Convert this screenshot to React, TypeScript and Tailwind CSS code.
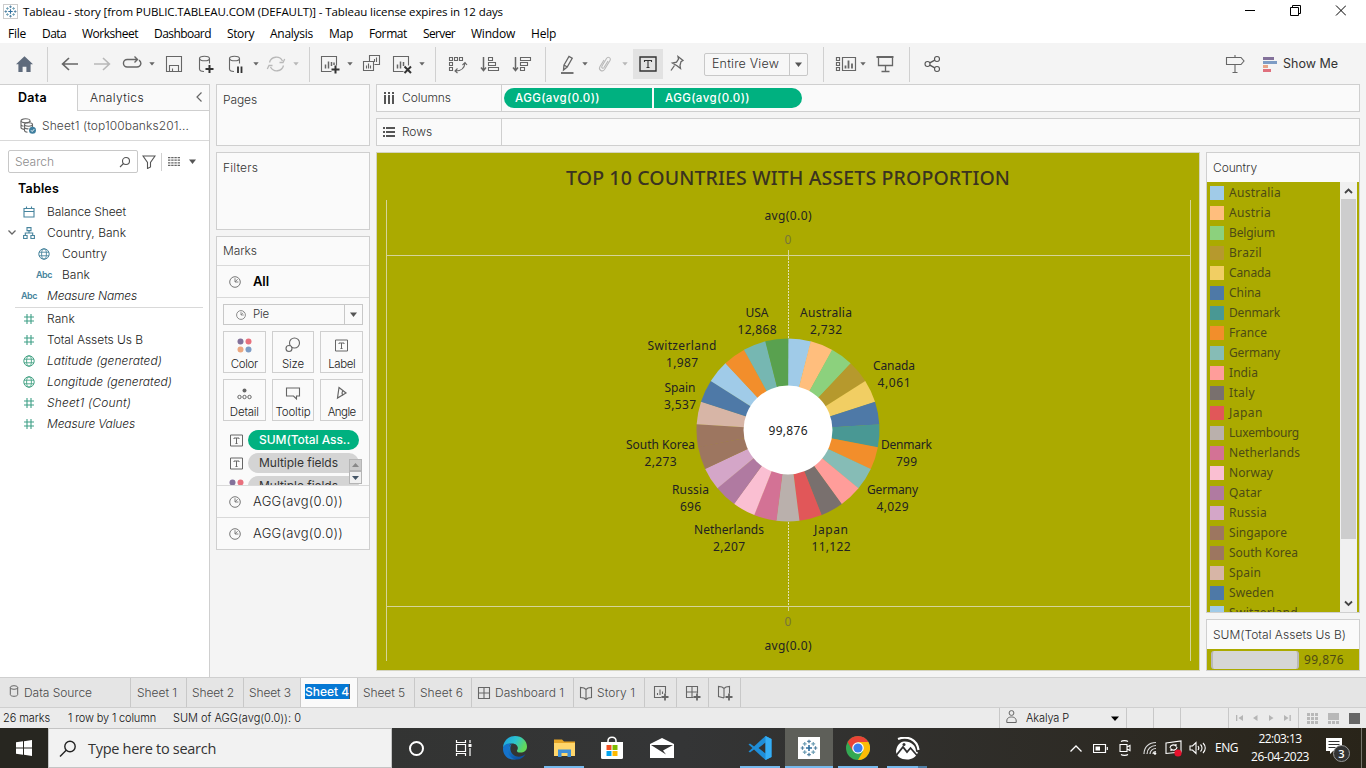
import React, { useLayoutEffect, useRef } from 'react';

const UI = "font-['Inter','Liberation_Sans',sans-serif]";
const SEGOE = "font-['Open_Sans','Noto_Sans',sans-serif]";
const BOOK = "font-['Noto_Sans',sans-serif]";

/** Single-line label whose tracking is adjusted to fill exactly `w` pixels. */
function Fit({ w, c = '', children }: { w: number; c?: string; children: string }) {
  const ref = useRef<HTMLSpanElement>(null);
  useLayoutEffect(() => {
    const el = ref.current;
    if (!el) return;
    el.style.letterSpacing = '0px';
    const natural = el.getBoundingClientRect().width;
    el.style.letterSpacing = `${(w - natural) / children.length}px`;
  }, [w, children]);
  return (
    <span ref={ref} className={`inline-block shrink-0 whitespace-pre ${c}`}>
      {children}
    </span>
  );
}

function Ic({ s = 20, vb, c = 'text-[#666]', children }: { s?: number; vb?: number; c?: string; children: React.ReactNode }) {
  return (
    <svg width={s} height={s} viewBox={`0 0 ${vb ?? s} ${vb ?? s}`} fill="none" stroke="currentColor" strokeWidth="1.1" className={`shrink-0 ${c}`}>
      {children}
    </svg>
  );
}

function Caret({ c = 'text-[#666]' }: { c?: string }) {
  return (
    <svg width="6" height="4" viewBox="0 0 6 4" className={`shrink-0 ${c}`}>
      <path d="M0.3 0.3h5.4L3 3.6z" fill="currentColor" />
    </svg>
  );
}

function Slot({ c, children }: { c: string; children: React.ReactNode }) {
  return <div className={`flex h-10 shrink-0 items-center justify-center ${c}`}>{children}</div>;
}
const Sep = ({ c = '' }: { c?: string }) => <div className={`h-[35px] w-px shrink-0 bg-[#d0d0d0] ${c}`} />;

const TableauMark = ({ s }: { s: number }) => (
  <svg width={s} height={s} viewBox="0 0 16 16" fill="none" stroke="#4f7f9f" strokeWidth="1.1" className="shrink-0">
    <path d="M8 5.3v5.4M5.3 8h5.4" stroke="#2f6f9f" strokeWidth="1.4" />
    <path d="M8 0.6v3.2M6.4 2.2h3.2M8 12.2v3.2M6.4 13.8h3.2M0.6 8h3.2M2.2 6.4v3.2M12.2 8h3.2M13.8 6.4v3.2" />
    <path d="M4.2 2.6v3.4M2.5 4.3h3.4M11.8 2.6v3.4M10.1 4.3h3.4M4.2 10v3.4M2.5 11.7h3.4M11.8 10v3.4M10.1 11.7h3.4" stroke="#6f9fb5" />
  </svg>
);

const menus: [string, number][] = [
  ['File', 18], ['Data', 24], ['Worksheet', 56], ['Dashboard', 57], ['Story', 27], ['Analysis', 43],
  ['Map', 24], ['Format', 38], ['Server', 32], ['Window', 44], ['Help', 25],
];

function TitleBar() {
  return (
    <div className={`h-[43px] shrink-0 bg-white text-black ${SEGOE}`}>
      <div className="flex h-[23px] items-center pl-[3px] pr-[20px]">
        <div className="mt-[-1px] flex h-[15px] w-[15px] items-center justify-center border border-[#ccc]">
          <TableauMark s={13} />
        </div>
        <Fit w={480} c="ml-[5px] text-[11.5px]">Tableau - story [from PUBLIC.TABLEAU.COM (DEFAULT)] - Tableau license expires in 12 days</Fit>
        <svg width="101" height="11" viewBox="0 0 101 11" fill="none" stroke="#000" className="ml-auto mt-[-3px] shrink-0">
          <path d="M0 5.5h10M45.5 2.5h8v8h-8zM47.5 2.5v-2h8v8h-2M91 0.5l10 10M101 0.5l-10 10" />
        </svg>
      </div>
      <div className="flex h-5 items-center gap-4 pl-2 pt-[2px] text-[12px]">
        {menus.map(([m, w]) => <Fit key={m} w={w}>{m}</Fit>)}
      </div>
    </div>
  );
}

function Toolbar() {
  const faint = 'text-[#b8b8b8]';
  return (
    <div className="flex h-[41px] shrink-0 items-center bg-[#f4f4f4] pt-px">
      <Slot c="w-[48px] pr-px">
        <Ic c="text-[#5f6b7c]"><path d="M10.5 2.2l8.5 8h-2.4V18h-4.2v-5.2H8.6V18H4.4v-7.8H2z" fill="currentColor" stroke="none" /></Ic>
      </Slot>
      <Sep c="ml-[-1px]" />
      <Slot c="ml-[6px] w-[32px]"><Ic><path d="M18 10H3M9 4l-6.4 6L9 16" strokeWidth="1.7" /></Ic></Slot>
      <Slot c="w-[32px]"><Ic c={faint}><path d="M2 10h15M11 4l6.4 6L11 16" strokeWidth="1.6" /></Ic></Slot>
      <Slot c="w-[28px]"><Ic><path d="M6.500 13H5.200a3.700 3.700 0 010-7.500H15M12.500 2.500l3 3-3 3M17 6.200c3.200 2.200 2 6.800-2 6.800H6" strokeWidth="1.400" /></Ic></Slot>
      <Slot c="w-[12px]"><Caret /></Slot>
      <Slot c="w-[32px]"><Ic><path d="M2.500 2.500h15v15h-15zM5.500 17.500v-6h9v6M8.500 17v-2.500" /></Ic></Slot>
      <Slot c="w-[32px]"><Ic><ellipse cx="8.500" cy="4.500" rx="5" ry="2.300" /><path d="M3.500 4.500v10.500c0 1.500 2 2.500 4.500 2.500M13.500 4.500v5" /><path d="M13.500 11v8M9.500 15h8" stroke="#333" strokeWidth="2" /></Ic></Slot>
      <Slot c="w-[28px]"><Ic><ellipse cx="8.500" cy="4.500" rx="5" ry="2.300" /><path d="M3.500 4.500v10.500c0 1.500 2 2.500 4.500 2.500M13.500 4.500v5" /><path d="M12 12.500v6.500M15.500 12.500v6.500" stroke="#333" strokeWidth="1.800" /></Ic></Slot>
      <Slot c="w-[12px]"><Caret /></Slot>
      <Slot c="w-[28px]"><Ic c={faint}><path d="M3.500 8.500a7 7 0 0113-1.500M17.500 11.500a7 7 0 01-13 1.500M13.500 8.500h3.500l1.700-3.500M6.500 11.500H3l-1.700 3.500" strokeWidth="1.300" /></Ic></Slot>
      <Slot c="w-[12px]"><Caret c={faint} /></Slot>
      <Sep c="ml-[7px]" />
      <Slot c="ml-[6px] w-[28px]"><Ic><path d="M11.500 17.500h-10v-15h15v9" /><path d="M5.500 14.500v-4M8.500 14.500v-7M11.500 12v-4M14 11V8.500" strokeWidth="1.500" /><path d="M15.500 11.500v8M11.500 15.500h8" stroke="#333" strokeWidth="2" /></Ic></Slot>
      <Slot c="w-[12px]"><Caret /></Slot>
      <Slot c="w-[32px]"><Ic><path d="M7.500 7V1.500h10v9h-5M1.500 7.500h10v9h-10z" /><path d="M4.500 14.500v-3M6.500 14.500v-5M8.500 14.500v-3M12.500 8v-3M14.500 8V3.500" /></Ic></Slot>
      <Slot c="w-[28px]"><Ic><path d="M11.500 17.500h-10v-15h15v9" /><path d="M5.500 14.500v-4M8.500 14.500v-7M11.500 12v-4" strokeWidth="1.500" /><path d="M12.500 12.500l6.500 6.500M19 12.500L12.500 19" stroke="#333" strokeWidth="2" /></Ic></Slot>
      <Slot c="w-[12px]"><Caret /></Slot>
      <Sep c="ml-[7px]" />
      <Slot c="ml-[6px] w-[32px]"><Ic><path d="M1.500 3.500h3v3h-3zM6.500 3.500h3v3h-3zM11.500 3.500h3v3h-3zM1.500 8.500h3v3h-3zM1.500 13.500h3v3h-3zM7.500 17c6 0 9-3 9.500-8M14.500 11l2.500-2.500 2 2.500M9.500 14.500L7 17l2.500 2" /></Ic></Slot>
      <Slot c="w-[32px]"><Ic><path d="M3.500 3v13M1 13.500l2.500 3 2.500-3" strokeWidth="1.500" /><path d="M8.500 3.500h4v3h-4zM8.500 8.500h7v3h-7zM8.500 13.500h10v3h-10z" /></Ic></Slot>
      <Slot c="w-[32px]"><Ic><path d="M3.500 3v13M1 13.500l2.500 3 2.500-3" strokeWidth="1.500" /><path d="M8.500 3.500h10v3h-10zM8.500 8.500h7v3h-7zM8.500 13.500h4v3h-4z" /></Ic></Slot>
      <Sep c="ml-[7px]" />
      <Slot c="ml-[11px] w-[22px]"><Ic><path d="M3 19h12.500" strokeWidth="1.800" /><path d="M6 11l5-8.500 3.200 1.800L9.200 13 5.500 16zM6 11l3.200 2" strokeWidth="1.300" /></Ic></Slot>
      <Slot c="w-[12px]"><Caret /></Slot>
      <Slot c="ml-[2px] w-[24px]"><Ic c={faint}><path d="M13 7l-4 6.500c-1 1.500-3 .5-2-1.500L11.500 4.500c1.500-2.500 5-.5 3.500 2L9.500 15.500c-2 3-6.500.5-4.500-3L9 6" /></Ic></Slot>
      <Slot c="w-[16px]"><Caret c={faint} /></Slot>
      <div className="flex h-[30px] w-[30px] shrink-0 items-center justify-center bg-[#e2e2e2]">
        <Ic s={18} c="text-[#333]"><path d="M1 2h16v14H1z" strokeWidth="1.400" /><path d="M5.500 7V5.500h7V7M9 5.500v7M7.500 12.500h3" /></Ic>
      </div>
      <Slot c="w-[28px]"><Ic><path d="M11 3l5 4-2 1.200-1 3.800.5 3-3.500-2.800L5.500 9.500l4-.8 2-3zM7.500 12L4 17" transform="translate(0 -0.500)" strokeWidth="1.300" /></Ic></Slot>
      <div className="ml-[13px] flex h-[23px] w-[104px] shrink-0 items-center rounded-[2px] border border-[#c8c8c8] bg-[#f7f7f7]">
        <div className="flex h-full w-[85px] items-center border-r border-[#c8c8c8] pl-[7px]"><Fit w={67} c={`text-[12.500px] font-light text-[#333] ${UI}`}>Entire View</Fit></div>
        <div className="flex flex-1 justify-center"><svg width="7" height="5"><path d="M0 0.500h7L3.500 5z" fill="#555" /></svg></div>
      </div>
      <Sep c="ml-[15px]" />
      <Slot c="ml-[10px] w-[24px]"><svg width="22" height="20" fill="none" stroke="#666" strokeWidth="1.200"><path d="M1.500 3.500h3v3h-3zM1.500 8.500h3v3h-3zM1.500 13.500h3v3h-3zM7.500 3.500h13v13h-13z" /><path d="M10.500 14.500v-3M13.500 14.500v-8M17 14.500v-5" strokeWidth="1.800" /></svg></Slot>
      <Slot c="w-[10px]"><Caret /></Slot>
      <Slot c="w-[34px]"><Ic><path d="M1.500 3h17" strokeWidth="2" /><path d="M3.500 4v7.500h14V4M10.500 12v6M6.500 17.500h8" strokeWidth="1.300" /></Ic></Slot>
      <Sep c="ml-[7px]" />
      <Slot c="ml-[7px] w-[30px]"><Ic c="text-[#555]"><circle cx="5.500" cy="10" r="2.500" /><circle cx="15" cy="5" r="2.500" /><circle cx="15" cy="15" r="2.500" /><path d="M7.800 8.800l5-2.600M7.800 11.200l5 2.600" strokeWidth="1.400" /></Ic></Slot>
      <Slot c="ml-[273px] w-[30px]"><Ic><path d="M1.500 3.500h14.500l3 3.500-3 3.500H1.500zM10 1v2M10 11v7M7.500 18.500h5" /></Ic></Slot>
      <svg width="14" height="15" className="ml-[13px] shrink-0">
        <path d="M0 0h11v3H0z" fill="#83719a" /><path d="M0 4h14v3H0z" fill="#7d9cc5" /><path d="M0 8h5v3H0z" fill="#e8a487" /><path d="M0 12h8v3H0z" fill="#e0707d" />
      </svg>
      <Fit w={55} c={`ml-[6px] text-[12.5px] text-[#333] ${UI}`}>Show Me</Fit>
    </div>
  );
}

const Globe = ({ c }: { c: string }) => (
  <Ic s={12} c={c}><circle cx="6" cy="6" r="5.200" strokeWidth="1" /><ellipse cx="6" cy="6" rx="2.400" ry="5.200" strokeWidth="0.900" /><path d="M1 4.200h10M1 7.800h10" strokeWidth="0.900" /></Ic>
);
const Hash = () => <Ic s={12} c="text-[#3f9f86]"><path d="M4 1v10M8 1v10M1 4h10M1 8h10" strokeWidth="1.100" /></Ic>;
const Abc = () => <Fit w={16} c="text-[9px] font-semibold text-[#47849d]">Abc</Fit>;
const Cal = () => <Ic s={12} c="text-[#47849d]"><path d="M1 2.500h10v8.500H1zM1 5.500h10M3.500 0.500v2M8.500 0.500v2" /></Ic>;
const Tree = () => <Ic s={12} c="text-[#47849d]"><path d="M4 0.600h4v3H4zM0.600 8.500h3.500v3H0.600zM7.900 8.500h3.500v3H7.900zM6 3.500v2.500M2.300 8.500V6h7.400v2.500" /></Ic>;

function Field({ icon, name, w, italic, indent, open }: { icon: React.ReactNode; name: string; w: number; italic?: boolean; indent?: boolean; open?: boolean }) {
  return (
    <div className={`flex h-[21px] items-center ${indent ? 'pl-[15px]' : ''}`}>
      <div className="flex w-5 items-center justify-center">{open && <svg width="8" height="5" fill="none" stroke="#666" strokeWidth="1.300" className="ml-[3px]"><path d="M0.500 0.500L4 4l3.500-3.500" /></svg>}</div>
      <div className="flex w-[18px] shrink-0 items-center justify-center">{icon}</div>
      <Fit w={w} c={`ml-[9px] text-[12px] font-light text-[#1c1c1c] ${italic ? 'italic' : ''}`}>{name}</Fit>
    </div>
  );
}

function DataPane() {
  const teal = 'text-[#47849d]';
  const green = 'text-[#45a385]';
  return (
    <div className={`flex w-[210px] shrink-0 flex-col border-r border-t border-[#cfcfcf] bg-white ${UI}`}>
      <div className="flex h-[26px] shrink-0">
        <div className="flex w-[77px] items-center pl-[18px]"><Fit w={29} c="text-[12.5px] font-semibold text-black">Data</Fit></div>
        <div className="flex flex-1 items-center justify-between border-b border-l border-[#cfcfcf] bg-[#fafafa] pl-[12px] pr-[7px]">
          <Fit w={54} c="text-[12px] font-light text-[#222]">Analytics</Fit>
          <svg width="6" height="10" fill="none" stroke="#666" strokeWidth="1.200" className="mt-[-2px]"><path d="M5.500 0.500L1 5l4.500 4.500" /></svg>
        </div>
      </div>
      <div className="flex h-[30px] shrink-0 items-center border-b border-[#d9d9d9] pl-[20px]">
        <Ic s={16} c="text-[#666]">
          <ellipse cx="5.500" cy="2.800" rx="4.500" ry="2" /><path d="M1 3v6.500c0 1 1.500 1.700 3 1.900M10 3v1M1 6.500c0 1 1.200 1.500 2.500 1.800" />
          <ellipse cx="8.500" cy="6.500" rx="4" ry="1.700" /><path d="M4.500 6.500v6c0 1 1.500 1.600 3 1.800M12.500 6.500V9M4.500 9.500c.5 1 2 1.500 4 1.300" />
          <circle cx="12.500" cy="12.300" r="3.500" fill="#3f7f9f" stroke="none" /><path d="M11 12.300l1.200 1.200 2-2.300" stroke="#fff" strokeWidth="1" />
        </Ic>
        <Fit w={147} c="ml-[6px] text-[12px] font-light text-[#444]">Sheet1 (top100banks201...</Fit>
      </div>
      <div className="mt-[9px] flex h-[23px] shrink-0 items-center pl-2">
        <div className="flex h-[23px] w-[130px] items-center justify-between rounded-[2px] border border-[#c8c8c8] pl-[6px] pr-[6px]">
          <Fit w={39} c="text-[12px] font-light text-[#8c8c8c]">Search</Fit>
          <Ic s={12} c="text-[#555]"><circle cx="7" cy="5" r="3.500" /><path d="M4.500 7.500L1 11" /></Ic>
        </div>
        <Ic s={14} c="ml-[4px] text-[#555]"><path d="M1 1h12L8.500 7.500V12l-3 1.500v-6z" /></Ic>
        <div className="ml-[5px] h-[18px] w-px bg-[#d0d0d0]" />
        <svg width="12" height="9" className="ml-[6px]" stroke="#666" strokeWidth="1.300" strokeDasharray="2.400 0.800"><path d="M0 0.500h12M0 3.200h12M0 5.800h12M0 8.500h12" /></svg>
        <svg width="7" height="5" className="ml-[9px]"><path d="M0 0.500h7L3.500 5z" fill="#555" /></svg>
      </div>
      <div className="mt-[6px] flex h-[20px] shrink-0 items-center pl-[18px]"><Fit w={41} c="text-[12.5px] font-semibold text-black">Tables</Fit></div>
      <div className="mt-[2px]">
        <Field icon={<Cal />} name="Balance Sheet" w={79} />
        <Field icon={<Tree />} name="Country, Bank" w={79} open />
        <Field icon={<Globe c={teal} />} name="Country" w={45} indent />
        <Field icon={<Abc />} name="Bank" w={28} indent />
        <Field icon={<Abc />} name="Measure Names" w={90} italic />
      </div>
      <div className="mx-[15px] mb-px h-px w-[188px] translate-y-px bg-[#d9d9d9]" />
      <div>
        <Field icon={<Hash />} name="Rank" w={28} />
        <Field icon={<Hash />} name="Total Assets Us B" w={96} />
        <Field icon={<Globe c={green} />} name="Latitude (generated)" w={115} italic />
        <Field icon={<Globe c={green} />} name="Longitude (generated)" w={125} italic />
        <Field icon={<Hash />} name="Sheet1 (Count)" w={84} italic />
        <Field icon={<Hash />} name="Measure Values" w={88} italic />
      </div>
    </div>
  );
}

const PieIcon = ({ s = 12 }: { s?: number }) => (
  <Ic s={s} vb={12} c="text-[#777]"><circle cx="6" cy="6" r="5.300" strokeWidth="1" /><path d="M6 6V2.200M6 6h3.400M6 6l2.600-2.800" strokeWidth="0.900" /></Ic>
);
const TextIcon = ({ c = '' }: { c?: string }) => (
  <svg width="13" height="13" viewBox="0 0 13 13" fill="none" stroke="#666" className={`shrink-0 ${c}`}><path d="M0.500 1h12v11h-12z" /><path d="M4 5V4h5v1M6.500 4v5M5.500 9.500h2" /></svg>
);
const Dots = () => (
  <svg width="15" height="15" className="shrink-0"><circle cx="3.500" cy="3.500" r="3" fill="#83719a" /><circle cx="11.500" cy="3.500" r="3" fill="#e8707d" /><circle cx="3.500" cy="11.500" r="3" fill="#eba780" /><circle cx="11.500" cy="11.500" r="3" fill="#7d9cc5" /></svg>
);

function MarkButton({ label, w, children }: { label: string; w: number; children: React.ReactNode }) {
  return (
    <div className="flex h-[42px] flex-col items-center border border-[#cfcfcf] bg-[#fafafa]">
      <div className="flex h-[26px] items-center justify-center">{children}</div>
      <Fit w={w} c="text-[11.500px] font-light leading-[12px] text-[#1c1c1c]">{label}</Fit>
    </div>
  );
}

function Cards() {
  const card = 'border border-[#cfcfcf] bg-[#fafafa]';
  return (
    <div className={`ml-[6px] flex w-[154px] shrink-0 flex-col gap-[6px] text-[12px] font-light text-[#333] ${UI}`}>
      <div className={`h-[62px] pl-[6px] pt-[6px] leading-[18px] ${card}`}><Fit w={34}>Pages</Fit></div>
      <div className={`h-[78px] pl-[6px] pt-[6px] leading-[18px] ${card}`}><Fit w={35}>Filters</Fit></div>
      <div className={`flex h-[314px] flex-col ${card}`}>
        <div className="flex h-[29px] shrink-0 items-center border-b border-[#d9d9d9] pl-[6px]"><Fit w={34}>Marks</Fit></div>
        <div className="flex h-[32px] shrink-0 items-center border-b border-[#d9d9d9] pl-[12px]"><PieIcon /><Fit w={16} c="ml-[12px] text-[13px] font-semibold text-black">All</Fit></div>
        <div className="mx-[6px] mt-[6px] flex h-[21px] shrink-0 items-center border border-[#c8c8c8]">
          <div className="flex h-full flex-1 items-center border-r border-[#c8c8c8] pl-[12px]"><PieIcon s={10} /><Fit w={16} c="ml-[7px] text-[11.500px]">Pie</Fit></div>
          <div className="flex w-[17px] justify-center"><svg width="7" height="5"><path d="M0 0.500h7L3.500 5z" fill="#555" /></svg></div>
        </div>
        <div className="mx-[6px] mt-[6px] grid shrink-0 grid-cols-3 gap-[6px]">
          <MarkButton label="Color" w={27}><Dots /></MarkButton>
          <MarkButton label="Size" w={22}><Ic s={16}><circle cx="9.500" cy="6" r="5" /><circle cx="4" cy="11.500" r="3" fill="#fafafa" /></Ic></MarkButton>
          <MarkButton label="Label" w={27}><TextIcon /></MarkButton>
          <MarkButton label="Detail" w={29}><svg width="15" height="12" fill="none" stroke="#666" className="mt-[1px]"><circle cx="7.500" cy="2.500" r="2" fill="#666" stroke="none" /><circle cx="2.500" cy="9" r="1.700" /><circle cx="7.500" cy="9" r="1.700" /><circle cx="12.500" cy="9" r="1.700" /></svg></MarkButton>
          <MarkButton label="Tooltip" w={35}><Ic s={16}><path d="M1.500 3h13v8H11.500v3L8.500 11h-7z" /></Ic></MarkButton>
          <MarkButton label="Angle" w={28}><Ic s={14}><path d="M4 1.500l7 5.500-8.500 5z" strokeWidth="1.200" /><path d="M7.800 4.700c-1 1.500-.9 3.400.2 4.700" /></Ic></MarkButton>
        </div>
        <div className="relative mt-[9px] h-[56px] shrink-0 overflow-hidden border-b border-[#d9d9d9] text-[12px] font-normal">
          <div className="flex flex-col gap-[3px]">
            <div className="flex items-center pl-[13px]"><TextIcon /><div className="ml-[5px] flex h-5 w-[111px] items-center rounded-full bg-[#00b180] pl-[11px] text-white"><Fit w={91} c="font-medium">SUM(Total Ass..</Fit></div></div>
            <div className="flex items-center pl-[13px]"><TextIcon /><div className="ml-[5px] flex h-5 w-[111px] items-center rounded-full bg-[#d4d4d4] pl-[11px] text-[#333]"><Fit w={79}>Multiple fields</Fit></div></div>
            <div className="flex items-center pl-[12px]"><Dots /><div className="ml-[4px] flex h-5 w-[111px] items-center rounded-full bg-[#d4d4d4] pl-[11px] text-[#333]"><Fit w={79}>Multiple fields</Fit></div></div>
          </div>
          <div className="absolute right-[7px] top-[29px] flex w-[13px] flex-col">
            <div className="flex h-[12px] items-center justify-center border border-[#b5b5b5] bg-[#cacaca]"><svg width="7" height="4"><path d="M0 4h7L3.500 0z" fill="#888" /></svg></div>
            <div className="flex h-[13px] items-center justify-center border border-[#b5b5b5] bg-[#f0f0f0]"><svg width="7" height="4"><path d="M0 0h7L3.500 4z" fill="#445566" /></svg></div>
          </div>
        </div>
        <div className="flex h-[32px] shrink-0 items-center border-b border-[#d9d9d9] pl-[12px]"><PieIcon /><Fit w={90} c="ml-[12px] text-[13px] text-[#1c1c1c]">AGG(avg(0.0))</Fit></div>
        <div className="flex h-[31px] shrink-0 items-center pl-[12px]"><PieIcon /><Fit w={90} c="ml-[12px] text-[13px] text-[#1c1c1c]">AGG(avg(0.0))</Fit></div>
      </div>
    </div>
  );
}

const slices = [
  '#a0cbe8', '#ffbe7d', '#8cd17d', '#b6992d', '#f1ce63', '#4e79a7', '#499894', '#f28e2b', '#86bcb6', '#ff9d9a', '#79706e', '#e15759', '#bab0ac',
  '#d37295', '#fabfd2', '#b07aa1', '#d4a6c8', '#9d7660', '#9d7660', '#d7b5a6', '#4e79a7', '#a0cbe8', '#f28e2b', '#76b7b2', '#59a14f',
];
const countries = ['Australia', 'Austria', 'Belgium', 'Brazil', 'Canada', 'China', 'Denmark', 'France', 'Germany', 'India', 'Italy', 'Japan', 'Luxembourg', 'Netherlands', 'Norway', 'Qatar', 'Russia', 'Singapore', 'South Korea', 'Spain', 'Sweden', 'Switzerland'];
const countryWidths = [52, 42, 46, 33, 42, 32, 51, 38, 51, 29, 26, 34, 70, 71, 44, 33, 38, 58, 69, 32, 45, 69];

/* name, value, centre x, first baseline, name width, value width */
const labels: [string, string, number, number, number, number][] = [
  ['USA', '12,868', 380, 165, 23, 39], ['Australia', '2,732', 449, 165, 52, 32],
  ['Canada', '4,061', 517, 218, 42, 33], ['Denmark', '799', 529.5, 297, 51, 21],
  ['Germany', '4,029', 515.5, 342, 51, 32], ['Japan', '11,122', 454, 382, 34, 39],
  ['Netherlands', '2,207', 352, 382, 70, 32], ['Russia', '696', 313.500, 342, 37, 21],
  ['South Korea', '2,273', 283.500, 297, 69, 32], ['Spain', '3,537', 303, 240, 31, 32],
  ['Switzerland', '1,987', 305, 198, 69, 32],
];

function slicePath(i: number) {
  const cx = 411, cy = 278, R = 91.500, step = (Math.PI * 2) / slices.length;
  const a = i * step, b = a + step + 0.004;
  return `M${cx} ${cy}L${cx + R * Math.sin(a)} ${cy - R * Math.cos(a)}A${R} ${R} 0 0 1 ${cx + R * Math.sin(b)} ${cy - R * Math.cos(b)}Z`;
}

function Sheet() {
  return (
    <div className={`h-[519px] w-[824px] shrink-0 border border-[#d4d4c0] bg-[#abaa00] ${BOOK}`}>
      <svg width="822" height="517" viewBox="0 1 822 517" textAnchor="middle" fontSize="12" fill="#222">
        <text x="411" y="33" fontSize="19.500" fontWeight="500" fill="#3a3320" textLength="444">TOP 10 COUNTRIES WITH ASSETS PROPORTION</text>
        <g stroke="#d5d49a" fill="none" shapeRendering="crispEdges">
          <path d="M9.500 48v461M813.500 48v461M9.500 103.500h804M9.500 454.500h804" />
          <path d="M411.500 98v8M411.500 454v5" />
          <path d="M411.500 106v348" strokeDasharray="2 1" stroke="#e2e1b8" />
        </g>
        <text x="411" y="68" textLength="47">avg(0.0)</text>
        <text x="411" y="92" fill="#77743a">0</text>
        <text x="411" y="474" fill="#77743a">0</text>
        <text x="411" y="498" textLength="47">avg(0.0)</text>
        {slices.map((f, i) => <path key={i} d={slicePath(i)} fill={f} />)}
        <circle cx="411" cy="278" r="44.500" fill="#fff" />
        <text x="411" y="283" textLength="39">99,876</text>
        {labels.map(([n, v, x, y, nw, vw]) => (
          <g key={n}>
            <text x={x} y={y} textLength={nw}>{n}</text>
            <text x={x} y={y + 17} textLength={vw}>{v}</text>
          </g>
        ))}
      </svg>
    </div>
  );
}

function Legends() {
  return (
    <div className="ml-[6px] flex w-[154px] shrink-0 flex-col gap-[6px]">
      <div className="flex h-[461px] flex-col border border-[#cfcfcf] bg-[#fafafa]">
        <div className={`flex h-[29px] shrink-0 items-center pl-[6px] ${UI}`}><Fit w={44} c="text-[12px] font-light text-[#333]">Country</Fit></div>
        <div className="flex flex-1 overflow-hidden bg-[#abaa00] pr-[2px]">
          <div className={`h-[430px] flex-1 overflow-hidden pt-px ${BOOK}`}>
            {countries.map((n, i) => (
              <div key={n} className="flex h-5 items-center pl-[3px]">
                <svg width="14" height="14" className="shrink-0"><rect width="14" height="14" fill={slices[i]} /></svg>
                <Fit w={countryWidths[i]} c="ml-[5px] text-[12px] leading-5 text-[#4d4a14]">{n}</Fit>
              </div>
            ))}
          </div>
          <div className="flex h-[430px] w-[17px] flex-col items-center bg-[#f0f0f0]">
            <svg width="15" height="17" className="shrink-0" fill="none" stroke="#444" strokeWidth="1.800"><path d="M4 11l3.500-3.500L11 11" /></svg>
            <div className="h-[340px] w-[15px] bg-[#cdcdcd]" />
            <svg width="15" height="17" className="mt-auto shrink-0" fill="none" stroke="#444" strokeWidth="1.800"><path d="M4 6.500l3.500 3.500L11 6.500" /></svg>
          </div>
        </div>
      </div>
      <div className="flex h-[52px] flex-col border border-[#cfcfcf] bg-[#fafafa]">
        <div className={`flex h-[29px] shrink-0 items-center pl-[6px] ${UI}`}><Fit w={133} c="text-[12px] font-light text-[#333]">SUM(Total Assets Us B)</Fit></div>
        <div className={`flex flex-1 items-center bg-[#abaa00] pl-[4px] ${BOOK}`}>
          <div className="h-[18px] w-[88px] rounded-[3px] border-x-2 border-[#b9b9b9] bg-[#d6d6d6]" />
          <Fit w={40} c="ml-[5px] text-[12px] text-[#4d4a14]">99,876</Fit>
        </div>
      </div>
    </div>
  );
}

function Shelf({ label, w, rows, children }: { label: string; w: number; rows?: boolean; children?: React.ReactNode }) {
  return (
    <div className="flex h-[28px] shrink-0 border border-[#cfcfcf] bg-[#fafafa]">
      <div className="flex w-[125px] items-center border-r border-[#cfcfcf] pl-[6px]">
        <svg width="13" height="12" stroke="#555" strokeWidth="2" fill="none">
          {rows ? <path d="M0 2h2M3 2h9M0 6h2M3 6h9M0 10h2M3 10h9" /> : <path d="M2 0v2M2 3v9M6 0v2M6 3v9M10 0v2M10 3v9" />}
        </svg>
        <Fit w={w} c="ml-[6px] text-[12px] font-light text-[#333]">{label}</Fit>
      </div>
      <div className="flex items-center gap-[2px] pl-[2px]">{children}</div>
    </div>
  );
}

function Workspace() {
  return (
    <div className={`ml-[6px] flex w-[984px] shrink-0 flex-col gap-[6px] ${UI}`}>
      <Shelf label="Columns" w={49}>
        <div className="flex h-5 w-[148px] items-center rounded-l-full bg-[#00b180] pl-[11px] pt-px"><Fit w={85} c="text-[11.500px] font-medium text-white">AGG(avg(0.0))</Fit></div>
        <div className="flex h-5 w-[148px] items-center rounded-r-full bg-[#00b180] pl-[11px] pt-px"><Fit w={85} c="text-[11.500px] font-medium text-white">AGG(avg(0.0))</Fit></div>
      </Shelf>
      <Shelf label="Rows" w={30} rows />
      <div className="flex"><Sheet /><Legends /></div>
    </div>
  );
}

const DashIcon = ({ plus }: { plus?: boolean }) => <Ic s={16}><path d={plus ? 'M8.500 12.500h-7v-11h11v7M7 1.500v11M1.500 7h11' : 'M2.500 2.500h11v11h-11zM8 2.500v11M2.500 8h11'} />{plus && <path d="M12 8.500v7M8.500 12h7" strokeWidth="1.800" />}</Ic>;
const BookIcon = ({ plus }: { plus?: boolean }) => <Ic s={16}><path d={plus ? 'M7 13L1.500 11.500v-10L5 2l2 1.500L9 2l3.500-.5v7M7 3.500V13' : 'M8 14.500l-2-1.500-3.500-.5v-10L6 3l2 1.500L10 3l3.500-.5v10l-3.500.5zM8 4.500v10'} />{plus && <path d="M12 8.500v7M8.500 12h7" strokeWidth="1.800" />}</Ic>;
const SheetPlus = () => <Ic s={16}><path d="M8.500 12.500h-7v-11h11v7M4.500 10V8M7 10V4.500M9.500 9V6.500" /><path d="M12 8.500v7M8.500 12h7" strokeWidth="1.800" /></Ic>;

function Tabs() {
  const tab = 'flex shrink-0 items-center border-r border-[#c8c8c8]';
  return (
    <div className={`flex h-[31px] shrink-0 border-y border-[#cfcfcf] bg-[#e5e5e5] text-[12px] font-light text-[#4a4a4a] ${UI}`}>
      <div className={`w-[131px] pl-[9px] ${tab}`}>
        <svg width="10" height="12" fill="none" stroke="#666" className="mt-[-3px]"><ellipse cx="5" cy="2.500" rx="3.700" ry="1.800" /><path d="M1.300 2.500v7c0 2.400 7.400 2.400 7.400 0v-7" /></svg>
        <Fit w={68} c="ml-[5px]">Data Source</Fit>
      </div>
      <div className={`w-[56px] pl-[6px] ${tab}`}><Fit w={40}>Sheet 1</Fit></div>
      <div className={`w-[57px] pl-[5px] ${tab}`}><Fit w={42}>Sheet 2</Fit></div>
      <div className={`w-[57px] pl-[5px] ${tab}`}><Fit w={42}>Sheet 3</Fit></div>
      <div className={`w-[57px] bg-[#fafafa] pl-[4px] ${tab}`}><div className="mt-[-2px] flex h-[15px] w-[45px] items-center border-r border-[#555] bg-[#0578d4] text-white"><Fit w={44} c="font-medium">Sheet 4</Fit></div></div>
      <div className={`w-[57px] pl-[5px] ${tab}`}><Fit w={42}>Sheet 5</Fit></div>
      <div className={`w-[57px] pl-[5px] ${tab}`}><Fit w={43}>Sheet 6</Fit></div>
      <div className={`w-[102px] pl-[4px] ${tab}`}><DashIcon /><Fit w={69} c="ml-[3px]">Dashboard 1</Fit></div>
      <div className={`w-[71px] pl-[4px] ${tab}`}><BookIcon /><Fit w={38} c="ml-[3px]">Story 1</Fit></div>
      <div className={`w-[32px] justify-center ${tab}`}><SheetPlus /></div>
      <div className={`w-[32px] justify-center ${tab}`}><DashIcon plus /></div>
      <div className={`w-[32px] justify-center ${tab}`}><BookIcon plus /></div>
    </div>
  );
}

function Status() {
  const cell = 'flex h-full shrink-0 items-center border-l border-[#c8c8c8]';
  return (
    <div className={`flex h-5 shrink-0 items-center bg-[#ebebeb] text-[11px] font-light text-[#111] ${UI}`}>
      <div className="flex w-[999px] shrink-0 items-center pl-[3px]">
        <Fit w={47}>26 marks</Fit><Fit w={88} c="ml-[18px]">1 row by 1 column</Fit><Fit w={128} c="ml-[17px]">SUM of AGG(avg(0.0)): 0</Fit>
      </div>
      <div className={`w-[127px] pl-[6px] ${cell}`}>
        <svg width="11" height="13" fill="none" stroke="#666" className="mt-[-3px]"><circle cx="5.500" cy="3" r="2.400" /><path d="M0.800 12.500v-1.500c0-3.500 3-4 4.700-4s4.700.5 4.700 4v1.500z" /></svg>
        <Fit w={43} c="ml-[9px]">Akalya P</Fit>
        <svg width="8" height="5" className="ml-auto mr-[7px]"><path d="M0 0.500h8L4 5z" fill="#000" /></svg>
      </div>
      <div className={`w-[27px] ${cell}`} />
      <div className={`w-[27px] ${cell}`} />
      <div className={`w-[48px] ${cell}`} />
      <div className={`w-[70px] pl-[7px] ${cell}`}>
        <svg width="56" height="8" fill="#b5b5b5"><path d="M0 1h1.300v6H0zM7 1v6L2.500 4zM21.500 1v6L17 4zM33 1v6l4.500-3zM48 1v6l4.500-3zM53.500 1h1.300v6h-1.300z" /></svg>
      </div>
      <div className={`w-[68px] gap-[10px] pl-[8px] ${cell}`}>
        <svg width="11" height="11" fill="#b8b8b8"><path d="M0 0h3v3H0zM4 0h3v3H4zM8 0h3v3H8zM0 4h3v3H0zM4 4h3v3H4zM8 4h3v3H8zM0 8h3v3H0zM4 8h3v3H4zM8 8h3v3H8z" /></svg>
        <svg width="11" height="11" fill="#b8b8b8"><path d="M0 0h11v7H0zM0 8h3v3H0zM4 8h3v3H4zM8 8h3v3H8z" /></svg>
        <div className="h-[11px] w-[11px] bg-[#666]" />
      </div>
    </div>
  );
}

function TaskButton({ c, bar = '', children }: { c: string; bar?: string; children: React.ReactNode }) {
  return (
    <div className={`flex h-10 shrink-0 flex-col items-center ${c}`}>
      <div className="flex h-[38px] items-center justify-center pt-[2px]">{children}</div>
      <div className={`h-[2px] ${bar}`} />
    </div>
  );
}

function Taskbar() {
  const blue = 'bg-[#76b9ed]';
  return (
    <div className={`flex h-10 shrink-0 bg-linear-to-r from-[#32332f] via-[#343536] to-[#292419] text-white ${SEGOE}`}>
      <div className="flex w-12 shrink-0 items-center justify-center bg-[#272620]">
        <svg width="16" height="16" fill="#fff"><path d="M0 2.300L7 1.300v6.200H0zM8 1.200L16 0v7.500H8zM0 8.500h7v6.200l-7-1zM8 8.500h8V16l-8-1.200z" /></svg>
      </div>
      <div className="flex w-[344px] shrink-0 items-center border border-[#c4c4c4] bg-[#f2f2f2] pl-[10px] pt-[2px]">
        <Ic s={18} c="text-[#222]"><circle cx="11" cy="6.500" r="5.200" strokeWidth="1.400" /><path d="M7.200 10.300L1 16.500" strokeWidth="1.400" /></Ic>
        <Fit w={128} c="ml-[11px] text-[14.500px] text-[#333]">Type here to search</Fit>
      </div>
      <TaskButton c="w-[48px]"><svg width="17" height="17" fill="none" stroke="#fff" strokeWidth="2"><circle cx="8.500" cy="8.500" r="6.500" /></svg></TaskButton>
      <TaskButton c="w-[48px]"><svg width="18" height="16" fill="none" stroke="#fff" strokeWidth="1.200"><path d="M1.500 0v2.500h9V0M1.500 4.500h9v7h-9zM1.500 16v-2.500h9V16M15 0v3M15 8v8" /><path d="M13.500 4h3v3h-3z" fill="#fff" stroke="none" /></svg></TaskButton>
      <TaskButton c="w-[54px]">
        <svg width="24" height="24" viewBox="0 0 24 24">
          <defs>
            <linearGradient id="edgeA" x1="0" y1="0" x2="1" y2="0.400"><stop offset="0" stopColor="#1b9de2" /><stop offset="0.550" stopColor="#2cc3cf" /><stop offset="1" stopColor="#62d95a" /></linearGradient>
            <linearGradient id="edgeB" x1="0" y1="0" x2="0.600" y2="1"><stop offset="0" stopColor="#1a86d8" /><stop offset="1" stopColor="#0c4fa0" /></linearGradient>
          </defs>
          <path d="M0 11.500C.5 5 5.500 0 12 0c7 0 12 5 12 10.500 0 4-3 6-6.500 6-2.500 0-4-1-3.500-2 2-2.500.5-7-5-7C5 7.500 1.500 9 0 11.500z" fill="url(#edgeA)" />
          <path d="M0 12c.5-3 4-5 8.500-4.500C6.500 9 5.500 11.500 6 14.500c.7 4.500 5 7.500 9.500 7.500-7 4.500-16-1-15.500-10z" fill="#1573cb" />
          <path d="M8.800 8C6.500 11 7 16 10 18.500c3.500 3 8.500 3 12.500-.5-3 6.500-12 7.500-16 1.500C4 15.500 5 10 8.800 8z" fill="url(#edgeB)" />
        </svg>
      </TaskButton>
      <TaskButton c="ml-[-2px] w-[48px]" bar={`w-10 ${blue}`}>
        <svg width="23" height="20"><path d="M1 1.500h8l2 2h11V18H1z" fill="#e5a527" /><path d="M1 5h21v13H1z" fill="#ffd66b" /><path d="M5 19v-7.500h13V19h-3.500v-4h-6v4z" fill="#3f8fd6" /></svg>
      </TaskButton>
      <TaskButton c="w-[48px]">
        <svg width="24" height="24"><path d="M8 8V5c0-5 8-5 8 0v3" fill="none" stroke="#fff" strokeWidth="1.500" /><path d="M1 6h22v15.500q0 1.500-1.500 1.500h-19Q1 23 1 21.500z" fill="#fff" /><path d="M6.500 9h5v5h-5z" fill="#f25022" /><path d="M12.500 9h5v5h-5z" fill="#7fba00" /><path d="M6.500 15h5v5h-5z" fill="#00a4ef" /><path d="M12.500 15h5v5h-5z" fill="#ffb900" /></svg>
      </TaskButton>
      <TaskButton c="w-[52px]"><svg width="24" height="20"><path d="M0 6L12 0l12 6v14H0z" fill="#fff" /><path d="M1 7h22L13 12.500l3 4z" fill="#333" /></svg></TaskButton>
      <TaskButton c="ml-[46px] w-[51px]" bar={`w-10 ${blue}`}>
        <svg width="24" height="24"><path d="M17.500 0L6 10.500 2 7.500 0.500 8.500 4.500 12 0.500 15.500 2 16.500 6 13.500 17.500 24l6-3V3zM17.500 6.500v11L10.500 12z" fill="#1f8ed8" fillRule="evenodd" /><path d="M17.500 0l6 3v18l-6 3z" fill="#35aef5" /></svg>
      </TaskButton>
      <TaskButton c="bg-[#5e5f59] w-[48px]" bar={`w-full ${blue}`}><div className="flex h-[22px] w-[22px] items-center justify-center bg-white"><TableauMark s={18} /></div></TaskButton>
      <TaskButton c="w-[50px]" bar={`w-10 ${blue}`}>
        <svg width="24" height="24"><circle cx="12" cy="12" r="12" fill="#34a853" /><path d="M12 6h10.400A12 12 0 0112 24l5.200-9z" fill="#fbbc05" /><path d="M1.600 6a12 12 0 0110.400-6 12 12 0 0110.400 6H12l-5.200 9z" fill="#ea4335" /><circle cx="12" cy="12" r="5.800" fill="#fff" /><circle cx="12" cy="12" r="4.600" fill="#3b7ded" /></svg>
      </TaskButton>
      <TaskButton c="w-[48px]" bar={`w-10 bg-linear-to-r from-[#76b9ed] from-78% to-[#4f7fa5] to-78%`}>
        <svg width="25" height="23"><path d="M3 2C12-1.500 22 2 23.500 13" fill="none" stroke="#fff" strokeWidth="2.200" /><path d="M1 14C2 8 5 5 9 4.500c7-.5 12 4 12 10l2 1C21 20 17 22.500 12 22.500 6 22.500 1 19 1 14z" fill="#fff" /><path d="M1.500 18L8 10l4 5 3.500-4 7 8" fill="none" stroke="#303030" strokeWidth="1.800" /><circle cx="9" cy="7.500" r="1.500" fill="#303030" /></svg>
      </TaskButton>
      <div className="ml-auto flex shrink-0 items-center">
        <svg width="12" height="7" fill="none" stroke="#fff" strokeWidth="1.300"><path d="M0.500 6.500L6 1l5.500 5.500" /></svg>
        <svg width="15" height="9" className="ml-[11px]" fill="none" stroke="#fff" strokeWidth="1.200"><path d="M0.500 0.500h12v8h-12zM14.300 3v3" /><path d="M2.500 2.500h4.500v4H2.500z" fill="#fff" stroke="none" /></svg>
        <svg width="12" height="16" className="ml-[11px]" fill="none" stroke="#fff" strokeWidth="1.100"><path d="M1 4.500h7v7H1zM8 7l3-1.500v5L8 9M2 1.500c1.500-1.200 5.500-1.200 7 0M2 14.500c1.500 1.200 5.500 1.200 7 0" /></svg>
        <svg width="14" height="14" className="ml-[12px]" fill="none" stroke="#ddd" strokeWidth="1.200"><path d="M1 13C1 6 6 1.500 13 1.500M4 13c0-5 4-8.500 9-8.500M7 13c0-3 2.500-5.500 6-5.500M10 13c0-1.500 1-2.500 3-2.500" /><circle cx="12" cy="12.500" r="1.300" fill="#fff" stroke="none" /></svg>
        <svg width="17" height="17" className="ml-[8px]" fill="none" stroke="#fff" strokeWidth="1.100"><path d="M1 3L16 1v11l-15 1.500zM5 8c0-3 4-4 6-2V4M12 7c0 3-4 4-6 2v2" /><circle cx="13" cy="13" r="3.600" fill="#e8112d" stroke="none" /></svg>
        <svg width="17" height="14" className="ml-[7px]" fill="none" stroke="#fff" strokeWidth="1.100"><path d="M1 5h2.500L7 1.500v11L3.500 9H1zM9 5c1 1.200 1 2.800 0 4M11.500 3.500c2 2 2 5 0 7M14 2c3 3 3 7 0 10" /></svg>
        <Fit w={23} c="ml-[9px] text-[12px]">ENG</Fit>
        <div className="ml-[13px] flex w-[58px] flex-col items-center text-[12px] leading-[18px]"><Fit w={43}>22:03:13</Fit><Fit w={58}>26-04-2023</Fit></div>
        <svg width="26" height="25" className="ml-[16px] mt-[4px]" viewBox="0 0 26 25"><path d="M1 0h16v13H8l-3 3v-3H1z" fill="#fff" /><path d="M3.500 3.500h11M3.500 6.500h11M3.500 9.500h7" stroke="#333" /><circle cx="16.500" cy="15.500" r="8" fill="#333" stroke="#999" /><text x="16.500" y="19.500" fontSize="11" fontWeight="600" textAnchor="middle" fill="#fff">3</text></svg>
        <div className="ml-[10px] mr-[4px] h-10 w-px bg-[#77746c]" />
      </div>
    </div>
  );
}

export default function App() {
  return (
    <div className="flex h-[768px] w-[1366px] flex-col overflow-hidden bg-[#f4f4f4]">
      <TitleBar />
      <Toolbar />
      <div className="flex h-[593px] shrink-0"><DataPane /><Cards /><Workspace /></div>
      <Tabs />
      <Status />
      <Taskbar />
    </div>
  );
}
